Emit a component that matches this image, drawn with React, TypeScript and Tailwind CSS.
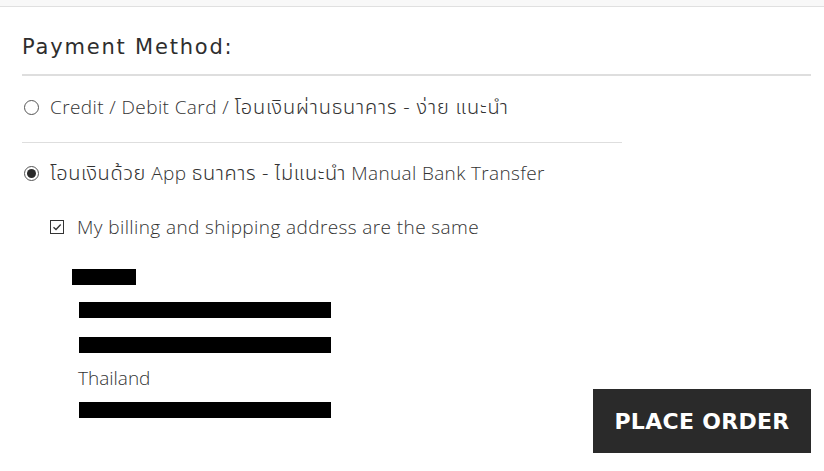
import React from "react";

const body = { fontFamily: '"Open Sans", "Noto Sans Thai", "Noto Sans Thai UI", "Loma", "Garuda", "Noto Sans", sans-serif' };
const head = { fontFamily: '"DejaVu Sans", "Open Sans", sans-serif' };

function Radio({ checked }: { checked?: boolean }) {
  return (
    <span className="w-[15px] h-[15px] rounded-full border border-[#555] bg-white flex items-center justify-center shrink-0">
      {checked && <span className="w-[9px] h-[9px] rounded-full bg-[#2a2a2a]" />}
    </span>
  );
}

export default function App() {
  return (
    <div className="w-[824px] h-[471px] bg-white overflow-hidden text-[#333]">
      <div className="h-[7px] bg-[#f8f8f8] border-b border-[#e0e0e0]" />
      <div className="pl-[22px] pr-[13px]">
        <h2 className="mt-[26px] h-[28px] leading-[28px] text-[21px] font-medium tracking-[1.8px] text-[#2e2e2e]" style={head}>
          Payment Method:
        </h2>
        <div className="mt-[13px] h-[2px] bg-[#dedede]" />
        <div className="mt-[17px] h-[28px] flex items-center gap-[11px] text-[19px] font-light text-[#333] whitespace-nowrap" style={body}>
          <span className="ml-[2px]"><Radio /></span>
          <span className="tracking-[0.4px]">
            Credit / Debit Card / <span className="text-[20px] tracking-[0.8px]">โอนเงินผ่านธนาคาร - ง่าย แนะนำ</span>
          </span>
        </div>
        <div className="mt-[21px] h-px w-[600px] bg-[#dedede]" />
        <div className="mt-[16px] h-[28px] flex items-center gap-[11px] text-[19px] font-light text-[#333] whitespace-nowrap" style={body}>
          <span className="ml-[2px]"><Radio checked /></span>
          <span className="tracking-[0.35px]">
            <span className="text-[20px] tracking-[0.6px]">โอนเงินด้วย</span> App <span className="text-[20px] tracking-[0.6px]">ธนาคาร - ไม่แนะนำ</span> Manual Bank Transfer
          </span>
        </div>
        <div className="mt-[26px] h-[28px] flex items-center gap-[13px] text-[19px] font-light text-[#333] pl-[28px]" style={body}>
          <span className="w-[14px] h-[14px] border border-[#333] flex items-center justify-center shrink-0">
            <svg width="10" height="10" viewBox="0 0 10 10">
              <path d="M1.5 5.2 L4 7.5 L8.7 2.5" fill="none" stroke="#333" strokeWidth="1.3" />
            </svg>
          </span>
          <span className="tracking-[0.4px]">My billing and shipping address are the same</span>
        </div>
        <div className="flex justify-between items-end">
          <div className="pt-[28px] text-[19px] font-light text-[#333]" style={body}>
            <div className="ml-[50px] w-[64px] h-[16px] bg-black" />
            <div className="ml-[57px] mt-[17px] w-[252px] h-[16px] bg-black" />
            <div className="ml-[57px] mt-[19px] w-[252px] h-[16px] bg-black" />
            <div className="ml-[56px] mt-[11px] h-[28px] leading-[28px]">Thailand</div>
            <div className="ml-[57px] mt-[10px] w-[252px] h-[16px] bg-black" />
          </div>
          <button
            className="w-[218px] h-[64px] bg-[#2a2a2a] text-white text-[22px] font-bold tracking-[0.3px] mb-[-35px]"
            style={head}
          >
            PLACE ORDER
          </button>
        </div>
      </div>
    </div>
  );
}
